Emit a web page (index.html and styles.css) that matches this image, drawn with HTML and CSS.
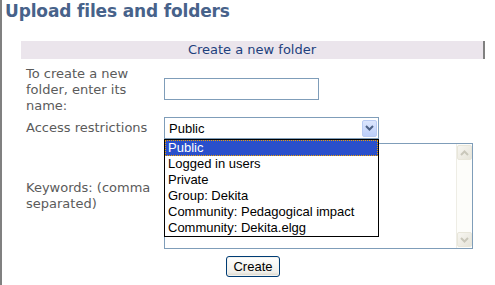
FILE: index.html
```html
<!DOCTYPE html>
<html lang="en">

<head>
    <meta charset="UTF-8">
    <title>Upload files and folders</title>
    <link rel="stylesheet" href="styles.css">
</head>

<body>
    <div class="page">
        <h1 class="title">Upload files and folders</h1>

        <div class="panel">
            <div class="panel-head">Create a new folder</div>

            <div class="row row-name">
                <label class="label" for="folder">To create a new folder, enter its name:</label>
                <input class="text" id="folder" type="text">
            </div>

            <div class="row row-access">
                <span class="label">Access restrictions</span>
                <div class="select">
                    <span class="select-value">Public</span>
                    <span class="select-button">
                        <svg width="9" height="6" viewBox="0 0 9 6">
                            <path d="M1 1 L4.5 4.5 L8 1" fill="none" stroke="#4d6185" stroke-width="2"/>
                        </svg>
                    </span>
                    <ul class="options">
                        <li class="option selected">Public</li>
                        <li class="option">Logged in users</li>
                        <li class="option">Private</li>
                        <li class="option">Group: Dekita</li>
                        <li class="option">Community: Pedagogical impact</li>
                        <li class="option">Community: Dekita.elgg</li>
                    </ul>
                </div>
            </div>

            <div class="row row-keywords">
                <span class="label">Keywords: (comma separated)</span>
                <div class="textbox">
                    <textarea class="area"></textarea>
                    <div class="scrollbar">
                        <span class="scroll-btn">
                            <svg width="9" height="6" viewBox="0 0 9 6">
                                <path d="M1 5 L4.5 1.5 L8 5" fill="none" stroke="#c9c7ba" stroke-width="2"/>
                            </svg>
                        </span>
                        <span class="scroll-btn">
                            <svg width="9" height="6" viewBox="0 0 9 6">
                                <path d="M1 1 L4.5 4.5 L8 1" fill="none" stroke="#c9c7ba" stroke-width="2"/>
                            </svg>
                        </span>
                    </div>
                </div>
            </div>

            <div class="row row-submit">
                <button class="button" type="button">Create</button>
            </div>
        </div>
    </div>
</body>

</html>
```

FILE: styles.css
```css
body {
    margin: 0;
    background: #ffffff;
    font-family: "DejaVu Sans", Verdana, sans-serif;
}

.page {
    min-height: 285px;
    box-sizing: border-box;
    border-left: 2px solid #808080;
    padding-top: 1px;
}

.title {
    margin: 0 0 0 3px;
    font-size: 17px;
    line-height: 20px;
    font-weight: bold;
    letter-spacing: -0.15px;
    color: #47628a;
}

.panel {
    width: 464px;
    margin: 20px 0 0 19px;
}

.panel-head {
    height: 18px;
    line-height: 18px;
    background: #ebe5ec;
    border-right: 2px solid #808080;
    text-align: center;
    font-size: 13px;
    color: #1d3f7c;
}

.row {
    display: flex;
    align-items: center;
}

.label {
    width: 143px;
    flex-shrink: 0;
    box-sizing: border-box;
    padding: 0 6px 0 5px;
    font-size: 13px;
    line-height: 16px;
    color: #5b5b5b;
}

.row-name {
    margin-top: 7px;
}

.row-name .text {
    margin-bottom: 3px;
}

.row-access {
    margin-top: 3px;
}

.row-keywords {
    margin-top: 4px;
}

.row-submit {
    margin-top: 7px;
    justify-content: center;
}

.text {
    width: 155px;
    height: 22px;
    box-sizing: border-box;
    margin: 0;
    border: 1px solid #7f9db9;
    font-family: "Liberation Sans", Arial, sans-serif;
    font-size: 13px;
}

.select {
    position: relative;
    display: flex;
    align-items: center;
    width: 215px;
    height: 22px;
    box-sizing: border-box;
    border: 1px solid #7f9db9;
    font-family: "Liberation Sans", Arial, sans-serif;
    font-size: 13px;
    color: #000000;
}

.select-value {
    flex: 1;
    padding-left: 4px;
}

.select-button {
    display: flex;
    align-items: center;
    justify-content: center;
    width: 15px;
    height: 17px;
    margin-right: 1px;
    box-sizing: border-box;
    border: 1px solid #b9cbf3;
    border-radius: 2px;
    background: linear-gradient(to bottom, #dce6fd, #bccffb);
}

.options {
    position: absolute;
    top: 21px;
    left: -1px;
    width: 215px;
    margin: 0;
    padding: 0;
    list-style: none;
    box-sizing: border-box;
    border: 1px solid #000000;
    background: #ffffff;
    z-index: 2;
}

.option {
    height: 16px;
    line-height: 16px;
    padding-left: 3px;
    white-space: nowrap;
}

.option.selected {
    height: 16px;
    box-sizing: border-box;
    line-height: 14px;
    padding-left: 2px;
    background: #2a4fcb;
    border: 1px dotted #f0a000;
    color: #ffffff;
}

.textbox {
    display: flex;
    width: 309px;
    height: 106px;
    box-sizing: border-box;
    border: 1px solid #7f9db9;
    background: #ffffff;
}

.area {
    flex: 1;
    margin: 0;
    border: 0;
    resize: none;
    outline: none;
}

.scrollbar {
    display: flex;
    flex-direction: column;
    justify-content: space-between;
    width: 16px;
    padding: 1px 0;
    box-sizing: border-box;
    border-left: 1px solid #eeede5;
    background: #fdfdfa;
}

.scroll-btn {
    display: flex;
    align-items: center;
    justify-content: center;
    width: 15px;
    height: 15px;
    box-sizing: border-box;
    border: 1px solid #e8e6da;
    border-radius: 2px;
    background: linear-gradient(to bottom right, #f7f6f1, #e6e4d9);
}

.button {
    width: 54px;
    height: 21px;
    padding: 0;
    box-sizing: border-box;
    border: 1px solid #003c74;
    border-radius: 3px;
    background: linear-gradient(to bottom, #ffffff, #f0efea 80%, #d8d4c8);
    box-shadow: inset 0 0 0 1px #f4f3ee;
    font-family: "Liberation Sans", Arial, sans-serif;
    font-size: 13px;
    color: #000000;
}
```
